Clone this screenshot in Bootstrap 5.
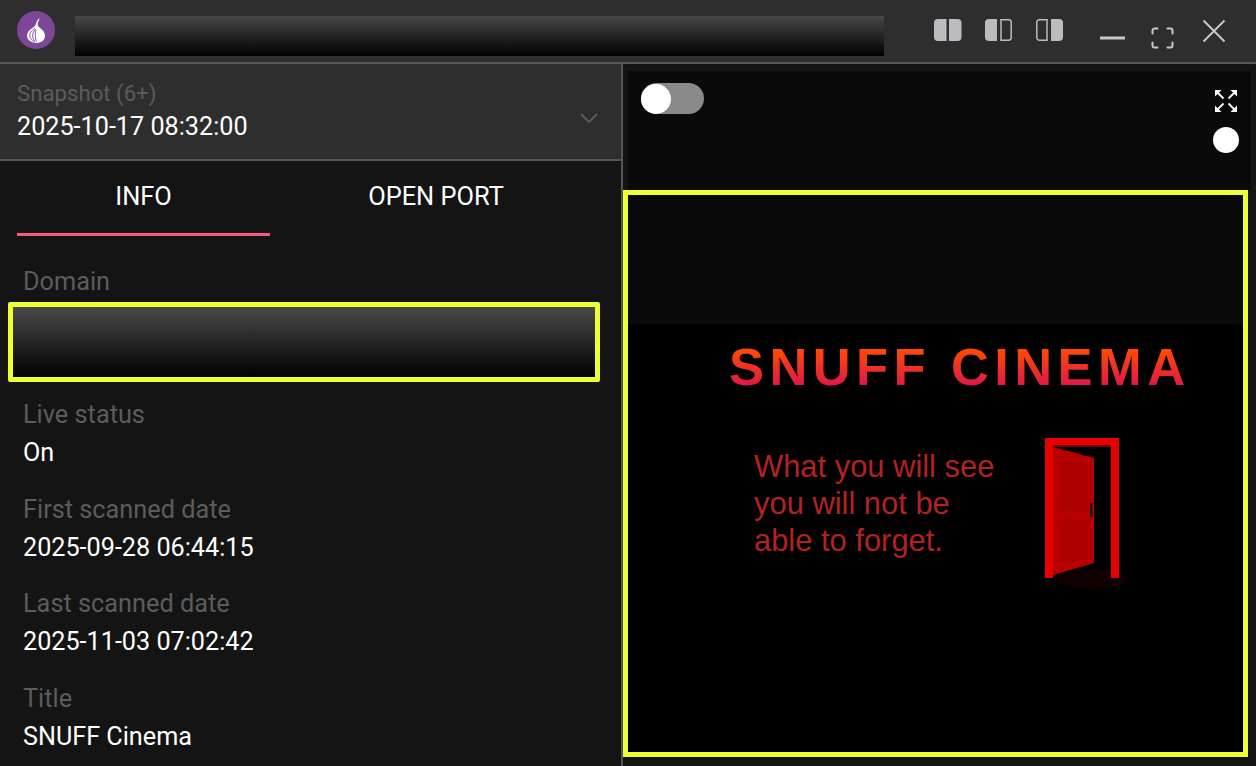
<!DOCTYPE html>
<html lang="en">
<head>
<meta charset="utf-8">
<title>Snapshot</title>
<link rel="stylesheet" href="https://cdn.jsdelivr.net/npm/bootstrap@5.3.0/dist/css/bootstrap.min.css">
<style>
html,body{height:100%;}
body{background:#141414;color:#fff;font-family:Roboto,"Liberation Sans",sans-serif;overflow:hidden;}
.shell{height:766px;}
.topbar{height:64px;background:#2e2e2e;border-bottom:2px solid #555;padding:0 0 0 17px;flex:none;}
.tor-logo{width:38px;height:38px;margin-top:-2px;flex:none;}
.redact-title{width:809px;height:40px;margin:10px 0 0 20px;background:linear-gradient(#484848,#000);flex:none;}
.win-icons{margin:8px 0 0 49px;}
.win-icons svg{display:block;flex:none;}
.body-row{height:702px;}
.left-pane{width:623px;flex:none;border-right:2px solid #555;background:#141414;}
.snap-box{height:97px;flex:none;background:#2e2e2e;border-bottom:2px solid #555;padding:13px 23px 0 17px;}
.snap-label{font-size:22.2px;line-height:33px;color:#5c5c5c;}
.snap-value{font-size:25.2px;line-height:33px;color:#fff;}
.tab-row{padding:0 0 0 17px;height:76px;flex:none;}
.tab-item{font-size:25.4px;line-height:32px;color:#fff;text-align:center;padding-top:19px;height:75px;flex:none;}
.tab-info{width:253px;border-bottom:3px solid #f8587c;}
.tab-port{width:332px;}
.info-list{padding:26px 0 0 23px;}
.fld{margin-bottom:18.7px;}
.fld-label{font-size:25.3px;line-height:38px;color:#5c5c5c;}
.fld-value{font-size:25.2px;line-height:38px;color:#fff;}
.fld-domain{margin:1px 0 14px -15px;width:592px;height:80px;border:5px solid #eeff33;border-radius:2px;background:linear-gradient(#4a4a4a,#000);}
.right-pane{background:#141414;min-width:0;}
.viewer-top{height:120px;background:#0a0a0a;margin:7px 5px 0 5px;padding:12px 0 0 13px;}
.switch-track{width:63px;height:31px;border-radius:16px;background:#8a8a8a;padding:0;}
.switch-knob{width:30px;height:30px;border-radius:50%;background:#fff;display:block;}
.viewer-tools{margin:7px 12px 0 0;}
.rec-dot{width:26px;height:26px;border-radius:50%;background:#fff;margin-top:15px;}
.shot-frame{width:625px;height:567px;border:5px solid #eeff33;margin:-1px 0 0 0;background:#000;}
.shot-band{height:129px;background:#0a0a0a;}
.shot-title{font-family:"Liberation Sans",Arial,sans-serif;font-weight:700;font-size:52.5px;line-height:60px;letter-spacing:5.4px;margin:13px 0 0 101px;width:max-content;background:linear-gradient(#ff4d00 18%,#e0164a 82%);-webkit-background-clip:text;background-clip:text;color:transparent;}
.shot-row{margin:41px 0 0 126px;}
.shot-copy{font-family:"Liberation Sans",Arial,sans-serif;font-size:30.9px;line-height:37px;color:#b22222;width:291px;padding:10px 45px 0 0;}
</style>
</head>
<body>
<div class="shell d-flex flex-column">
  <header class="topbar d-flex align-items-center">
    <svg class="tor-logo" viewBox="0 0 38 38" aria-label="Tor logo">
      <circle cx="19" cy="19" r="19" fill="#7d4698"/>
      <path d="M23 7c-1.300 2.300-2.200 4.500-2.300 6.800.2 1.200 1.100 2.200 3 3.700 2.600 2 4.300 4.300 4.300 7.300 0 4.500-3.600 7.200-8.300 7.200-4.900 0-9.700-3-9.700-7.200 0-3.500 2.500-5.900 5.500-7.800 1.700-1.100 2.900-2.200 3.300-3.700.4-2.400 1.700-4.700 4.200-6.300z" fill="#fff"/>
      <path d="M18 17.500c-3.600 2-5.500 4.300-5.200 7.500.2 2.300 1.900 4.400 4.700 5.700M18.400 18.500c-2 2-3 4-2.800 6.700.1 2 1 3.800 2.600 5.300M19 19c-.7 2-1 4-.8 6.200.1 2 .6 3.700 1.400 5.300" fill="none" stroke="#7d4698" stroke-width=".9"/>
    </svg>
    <div class="redact-title"></div>
    <div class="win-icons d-flex align-items-start">
      <svg width="30" height="24" viewBox="0 0 30 24" style="margin-top:-3px"><path d="M5 1h8.500v22H5a4 4 0 0 1-4-4V5a4 4 0 0 1 4-4zM16 1h8.500a4 4 0 0 1 4 4v14a4 4 0 0 1-4 4H16z" fill="#bcbcc0"/></svg>
      <svg width="29" height="24" viewBox="0 0 29 24" style="margin:-3px 0 0 21px"><path d="M5 1h8v22H5a4 4 0 0 1-4-4V5a4 4 0 0 1 4-4z" fill="#bcbcc0"/><path d="M17 1.800h7.500a2.700 2.700 0 0 1 2.700 2.700v15a2.700 2.700 0 0 1-2.700 2.700H17z" fill="none" stroke="#bcbcc0" stroke-width="1.500"/></svg>
      <svg width="28" height="24" viewBox="0 0 28 24" style="margin:-3px 0 0 22px"><path d="M12 1.800H4.500a2.700 2.700 0 0 0-2.700 2.700v15a2.700 2.700 0 0 0 2.700 2.700H12z" fill="none" stroke="#bcbcc0" stroke-width="1.500"/><path d="M16 1h8a4 4 0 0 1 4 4v14a4 4 0 0 1-4 4h-8z" fill="#bcbcc0"/></svg>
      <svg width="25" height="4" viewBox="0 0 25 4" style="margin:15px 0 0 37px"><path d="M0 2h25" stroke="#c8c8c8" stroke-width="3"/></svg>
      <svg width="23" height="22" viewBox="0 0 23 22" style="margin:6px 0 0 26px" fill="none" stroke="#c8c8c8" stroke-width="2" stroke-linecap="round"><path d="M1.500 6.500V3.500a2 2 0 0 1 2-2h3M16.500 1.500h3a2 2 0 0 1 2 2v3M21.500 15.500v3a2 2 0 0 1-2 2h-3M6.500 20.500h-3a2 2 0 0 1-2-2v-3"/></svg>
      <svg width="24" height="24" viewBox="0 0 24 24" style="margin:-2px 0 0 28px" fill="none" stroke="#c8c8c8" stroke-width="2"><path d="M1.500 1.500l21 21M22.500 1.500l-21 21"/></svg>
    </div>
  </header>
  <div class="body-row d-flex">
    <aside class="left-pane d-flex flex-column">
      <section class="snap-box d-flex justify-content-between align-items-center">
        <div class="align-self-start">
          <div class="snap-label">Snapshot (6+)</div>
          <div class="snap-value">2025-10-17 08:32:00</div>
        </div>
        <svg width="18" height="11" viewBox="0 0 18 11" style="margin-top:1px"><path d="M1 1l8 8 8-8" fill="none" stroke="#5c5c5c" stroke-width="1.800"/></svg>
      </section>
      <nav class="tab-row d-flex">
        <div class="tab-item tab-info">INFO</div>
        <div class="tab-item tab-port">OPEN PORT</div>
      </nav>
      <div class="info-list">
        <div class="fld-label">Domain</div>
        <div class="fld-domain"></div>
        <div class="fld"><div class="fld-label">Live status</div><div class="fld-value">On</div></div>
        <div class="fld"><div class="fld-label">First scanned date</div><div class="fld-value">2025-09-28 06:44:15</div></div>
        <div class="fld"><div class="fld-label">Last scanned date</div><div class="fld-value">2025-11-03 07:02:42</div></div>
        <div class="fld"><div class="fld-label">Title</div><div class="fld-value">SNUFF Cinema</div></div>
      </div>
    </aside>
    <main class="right-pane flex-grow-1">
      <div class="viewer-top d-flex justify-content-between">
        <div class="switch-track d-flex align-items-center"><span class="switch-knob"></span></div>
        <div class="viewer-tools d-flex flex-column align-items-center">
          <svg width="22" height="22" viewBox="0 0 22 22" fill="#fff" stroke="#fff"><path stroke="none" d="M0 0h6.500L0 6.500zM22 0v6.500L15.500 0zM0 22v-6.500L6.500 22zM22 22h-6.500l6.500-6.500z"/><path fill="none" stroke-width="1.800" d="M3 3l5.500 5.500M19 3l-5.500 5.500M3 19l5.500-5.500M19 19l-5.500-5.500"/></svg>
          <div class="rec-dot"></div>
        </div>
      </div>
      <div class="shot-frame">
        <div class="shot-band"></div>
        <div class="shot-title">SNUFF CINEMA</div>
        <div class="shot-row d-flex">
          <div class="shot-copy">What you will see you will not be able to forget.</div>
          <svg width="90" height="156" viewBox="0 0 90 156">
            <ellipse cx="47" cy="141" rx="36" ry="10" fill="#100000"/>
            <path d="M0 0h74v140h-8V7H8v133H0z" fill="#e60000"/>
            <rect x="8" y="7" width="58" height="2" fill="#7a0000"/>
            <path d="M8 9l41 11v105L8 137z" fill="#b80000"/>
            <path d="M15 19l29 7v48l-29-2zM15 80l29 2v38l-29 6z" fill="#ad0000"/>
            <rect x="45" y="65" width="2.500" height="14" fill="#1a1a1a"/>
          </svg>
        </div>
      </div>
    </main>
  </div>
</div>
<script src="https://cdn.jsdelivr.net/npm/bootstrap@5.3.0/dist/js/bootstrap.bundle.min.js"></script>
</body>
</html>
